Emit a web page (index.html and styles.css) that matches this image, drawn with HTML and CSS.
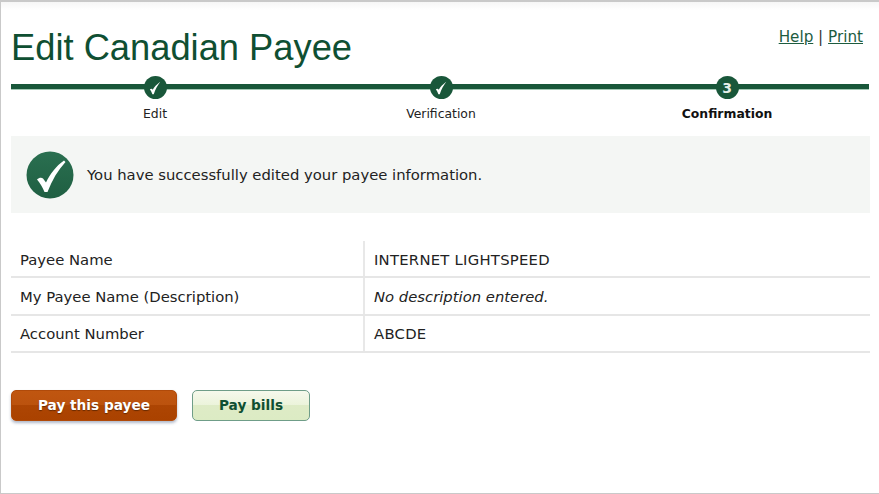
FILE: index.html
```html
<!DOCTYPE html>
<html lang="en">
<head>
<meta charset="utf-8">
<title>Edit Canadian Payee</title>
<link rel="stylesheet" href="styles.css">
</head>
<body>
<main class="page">
  <header class="head">
    <h1 class="title">Edit Canadian Payee</h1>
    <nav class="links"><a href="#">Help</a> <span class="sep">|</span> <a href="#">Print</a></nav>
  </header>
  <ol class="steps">
    <li class="step">
      <span class="dot"><svg class="tick" viewBox="0 0 14 14"><path d="M2.5 8.2 C3.6 7.4 4.4 7.6 5 8.6 C6.6 6 8.6 3.8 11.6 1.6 C9.4 4.6 7.4 8 5.9 12.4 L4.7 12.4 C4.1 10.8 3.4 9.4 2.5 8.2 Z" fill="#fff"/></svg></span>
      <span class="step-label">Edit</span>
    </li>
    <li class="step">
      <span class="dot"><svg class="tick" viewBox="0 0 14 14"><path d="M2.5 8.2 C3.6 7.4 4.4 7.6 5 8.6 C6.6 6 8.6 3.8 11.6 1.6 C9.4 4.6 7.4 8 5.9 12.4 L4.7 12.4 C4.1 10.8 3.4 9.4 2.5 8.2 Z" fill="#fff"/></svg></span>
      <span class="step-label">Verification</span>
    </li>
    <li class="step current">
      <span class="dot">3</span>
      <span class="step-label">Confirmation</span>
    </li>
  </ol>
  <section class="notice">
    <svg class="notice-icon" viewBox="0 0 48 48">
      <defs><linearGradient id="ok" x1="0" y1="0" x2="0" y2="1"><stop offset="0" stop-color="#2a6f50"/><stop offset="1" stop-color="#1f5f42"/></linearGradient></defs>
      <circle cx="24" cy="24" r="23.5" fill="url(#ok)"/>
      <path d="M11 28.5 C13 26.5 15.5 26 17 27.5 L20 31.5 C24 23 30 15 38 9.5 L39.5 11 C32 19 26 29 21.5 41 L18.5 41 C16.5 36 14 32 11 28.5 Z" fill="#fff"/>
    </svg>
    <p class="notice-text">You have successfully edited your payee information.</p>
  </section>
  <dl class="details">
    <div class="row"><dt class="key">Payee Name</dt><dd class="val caps">INTERNET LIGHTSPEED</dd></div>
    <div class="row"><dt class="key">My Payee Name (Description)</dt><dd class="val empty">No description entered.</dd></div>
    <div class="row"><dt class="key">Account Number</dt><dd class="val caps">ABCDE</dd></div>
  </dl>
  <div class="actions">
    <button class="btn primary" type="button">Pay this payee</button>
    <button class="btn secondary" type="button">Pay bills</button>
  </div>
</main>
</body>
</html>
```

FILE: styles.css
```css
* { box-sizing: border-box; }
html, body { margin: 0; padding: 0; background: #fff; }
body { width: 879px; height: 494px; overflow: hidden; font-family: "DejaVu Sans", Verdana, sans-serif; font-size: 14.8px; color: #222; }
.page { width: 879px; height: 494px; border: 1px solid #c9c9c9; border-width: 2px 0 1px 1px; padding: 0 9px 0 10px; background: linear-gradient(#f6f6f6, #fff 8px); }
.head { display: flex; justify-content: space-between; align-items: flex-start; height: 82px; }
.title { margin: 25px 0 0; font-family: "Liberation Sans", Arial, sans-serif; font-weight: 400; font-size: 36.3px; line-height: 42px; color: #0f4f32; }
.links { margin: 26px 7px 0 0; font-size: 15.2px; line-height: 18px; color: #333; }
.links a { color: #1d5c3f; text-decoration: underline; }
.steps { list-style: none; margin: 0 1px 0 0; padding: 0 0 0 1px; display: grid; grid-template-columns: repeat(3, 286px); height: 52px; background: linear-gradient(#19573a, #19573a) 0 0 / 100% 5px no-repeat, linear-gradient(#a3c9b4, #a3c9b4) 0 0 / 100% 6px no-repeat; }
.step { display: flex; flex-direction: column; align-items: center; }
.dot { width: 23px; height: 23px; margin-top: -8px; border-radius: 50%; background: #19573a; color: #e6efe9; font-size: 14px; font-weight: 600; display: flex; align-items: center; justify-content: center; }
.tick { width: 16px; height: 16px; }
.step-label { margin-top: 7px; font-size: 12.4px; line-height: 16px; color: #222; }
.current .step-label { font-weight: 700; color: #111; }
.notice { display: flex; align-items: center; gap: 13px; height: 77px; padding: 0 15px; background: #f4f6f4; }
.notice-icon { width: 48px; height: 48px; flex: none; }
.notice-text { margin: 0; font-size: 14.8px; }
.details { margin: 28px 0 0; }
.row { display: grid; grid-template-columns: 354px 1fr; height: 37.4px; border-bottom: 2px solid #e6e6e6; }
.key, .val { margin: 0; display: flex; align-items: center; }
.key { padding-left: 9px; border-right: 2px solid #e8e8e8; }
.val { padding-left: 9px; }
.row:first-child .key, .row:first-child .val { padding-top: 2px; }
.caps { letter-spacing: .26px; }
.empty { font-style: italic; }
.actions { display: flex; gap: 15px; margin-top: 37px; }
.btn { height: 31px; border-radius: 5px; font-family: "DejaVu Sans", Verdana, sans-serif; font-size: 13.7px; font-weight: 700; padding: 0 0 2px; cursor: pointer; }
.primary { width: 166px; color: #fff; border: 1px solid #b04a0a; background: linear-gradient(#c05610 0, #bb520e 50%, #ad4503 50%, #aa4200 100%); box-shadow: 0 2px 3px rgba(60, 80, 120, .4); text-shadow: 0 1px 1px rgba(0, 0, 0, .4); }
.secondary { width: 118px; color: #0f4f32; border: 1px solid #6f9d88; background: linear-gradient(#f6f9ec 0, #ebf3da 50%, #deebc6 50%, #dcebc4 100%); }
```
